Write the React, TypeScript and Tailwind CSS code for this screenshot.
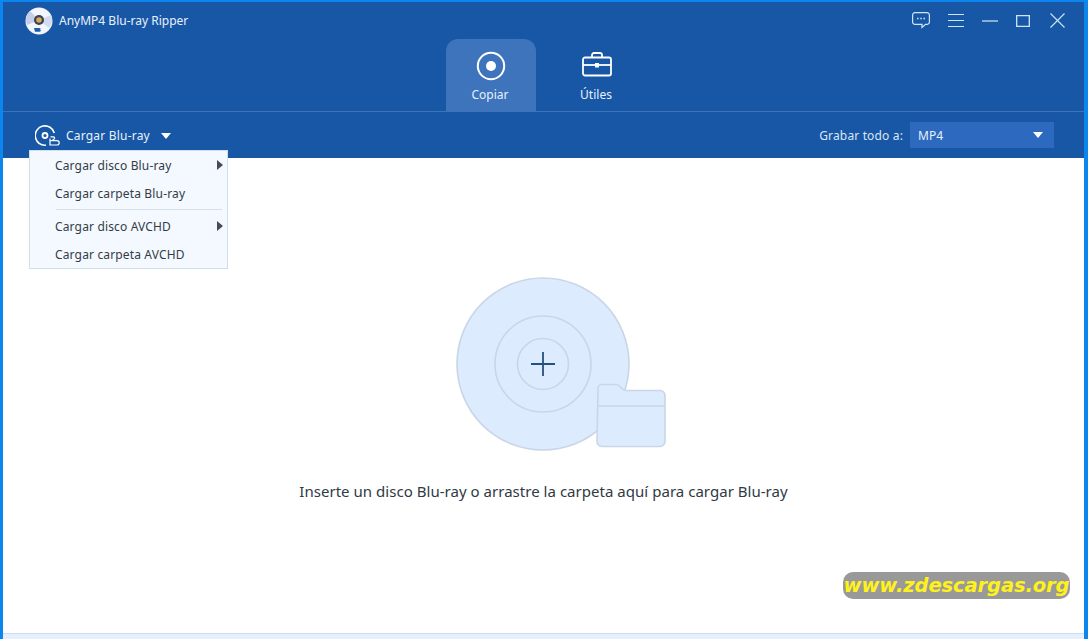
const font = "font-['Noto_Sans','DejaVu_Sans',sans-serif]"

function Caret({ className }: { className: string }) {
  return (
    <svg viewBox="0 0 12 7" className={className} fill="currentColor">
      <path d="M0 0h12L6 7z" />
    </svg>
  )
}

function DiscLogo() {
  return (
    <svg viewBox="0 0 28 28" className="h-7 w-7">
      <circle cx="14" cy="14" r="13.5" fill="#f2f5fb" />
      <path d="M14 13 L5 4 A13 13 0 0 0 2 18 Z" fill="#c5cdea" />
      <path d="M14 13 L24 21 A13 13 0 0 0 26 8 Z" fill="#d5dbef" />
      <circle cx="14" cy="13" r="5" fill="#39424f" />
      <circle cx="14" cy="13" r="2.8" fill="#d9a860" />
      <path d="M9 21h5c2 0 2 1.300 1 1.800 1.500.5 1 2-1 2h-4z" fill="#1d5bb0" />
    </svg>
  )
}

function MenuItem({ label, arrow }: { label: string; arrow?: boolean }) {
  return (
    <div className="flex h-[28px] items-center justify-between pl-[25px] pr-[4px] text-[12px] tracking-[0.15px] text-[#333c46]">
      <span className="pt-[2px]">{label}</span>
      {arrow && (
        <svg viewBox="0 0 6 10" className="h-[10px] w-[6px]" fill="#444c5a">
          <path d="M0 0l6 5-6 5z" />
        </svg>
      )}
    </div>
  )
}

export default function App() {
  return (
    <div className={`${font} relative flex h-[639px] w-[1088px] flex-col overflow-hidden border-t-[2px] border-r-[4px] border-l-[3px] border-[#0b86ee] bg-white`}>
      <header className="bg-[#1857a6] text-white">
        <div className="flex h-[37px] items-center justify-between pr-[19px] pl-[22px]">
          <div className="flex items-center gap-[6px]">
            <DiscLogo />
            <span className="text-[12px] text-[#e8f1fb]">AnyMP4 Blu-ray Ripper</span>
          </div>
          <div className="flex items-center gap-[18px] text-[#cfe6f8]">
            <svg viewBox="0 0 18 17" className="h-[17px] w-[18px]" fill="none" stroke="currentColor" strokeWidth="1.2">
              <path d="M3 .6h12a2.4 2.4 0 0 1 2.4 2.4v7a2.4 2.4 0 0 1-2.4 2.4h-1.5l-3.5 3v-3H3A2.4 2.4 0 0 1 .6 10V3A2.4 2.4 0 0 1 3 .6z" />
              <path d="M5 6.500h1.500M8.300 6.500h1.500M11.500 6.500H13" strokeWidth="1.6" />
            </svg>
            <svg viewBox="0 0 16 14" className="h-[14px] w-[16px]" stroke="currentColor" strokeWidth="1">
              <path d="M0 .5h16M0 6.500h16M0 12.500h16" />
            </svg>
            <svg viewBox="0 0 16 14" className="h-[14px] w-[16px]" stroke="currentColor" strokeWidth="1.2">
              <path d="M0 7h16" />
            </svg>
            <svg viewBox="0 0 14 12" className="h-[12px] w-[14px]" fill="none" stroke="currentColor" strokeWidth="1.3">
              <path d="M.7.7h12.600v10.600H.7z" />
            </svg>
            <svg viewBox="0 0 15 15" className="ml-[2px] h-[15px] w-[15px]" stroke="currentColor" strokeWidth="1.1">
              <path d="M.5.5l14 14M14.500.5l-14 14" />
            </svg>
          </div>
        </div>
        <div className="flex h-[73px] items-end justify-center border-b border-[#3d74b9]">
          <div className="flex h-[72px] w-[90px] flex-col items-center rounded-t-[12px] bg-[#3d74bb] pt-[12px]">
            <svg viewBox="0 0 30 30" className="h-[30px] w-[30px]">
              <circle cx="15" cy="15" r="13.2" fill="none" stroke="white" strokeWidth="2" />
              <circle cx="15" cy="15" r="5" fill="white" />
            </svg>
            <span className="mt-[5px] mr-[2px] text-[12px] text-[#e8f1fb]">Copiar</span>
          </div>
          <div className="ml-[15px] flex h-[72px] w-[90px] flex-col items-center pt-[13px]">
            <svg viewBox="0 0 30 26" className="ml-[2px] h-[26px] w-[30px]" fill="none" stroke="white" strokeWidth="1.8">
              <rect x="1" y="5.500" width="28" height="18" rx="2" />
              <path d="M1 13h28" />
              <path d="M10 5V3a2 2 0 0 1 2-2h6a2 2 0 0 1 2 2v2" />
              <rect x="13" y="11" width="4" height="4.500" fill="white" stroke="none" />
            </svg>
            <span className="mt-[8px] text-[12px] text-[#e8f1fb]">Útiles</span>
          </div>
        </div>
        <div className="flex h-[46px] items-center justify-between pt-px pr-[30px] pl-[32px]">
          <div className="flex items-center">
            <svg viewBox="0 0 26 22" className="h-[22px] w-[26px]" fill="none" stroke="white" strokeWidth="1.6">
              <path d="M19.300 8A9.700 9.700 0 1 0 11 20.200" />
              <circle cx="10" cy="10.500" r="2.500" strokeWidth="1.800" />
              <path d="M15 13.500v6.500h7a2.200 2.200 0 0 0 0-4.400h-7M17 15.600l2.500-2a1.300 1.300 0 0 0-1-1.800H15.500" strokeWidth="1.200" />
            </svg>
            <span className="ml-[5px] text-[12px] tracking-[0.2px] text-[#e8f1fb]">Cargar Blu-ray</span>
            <Caret className="ml-[11px] h-[6px] w-[10px] text-white" />
          </div>
          <div className="flex items-center">
            <span className="text-[12px] tracking-[0.15px] text-[#d8e6f5]">Grabar todo a:</span>
            <div className="mb-[2px] ml-[7px] flex h-[26px] w-[144px] items-center justify-between bg-[#2c69bf] pr-[11px] pl-[8px]">
              <span className="pt-[2px] text-[12px] text-[#e8f1fb]">MP4</span>
              <Caret className="h-[6px] w-[10px] text-white" />
            </div>
          </div>
        </div>
      </header>

      <main className="flex flex-1 flex-col items-center pt-[119px]">
        <svg viewBox="0 0 210 172" className="ml-[34px] h-[172px] w-[210px] overflow-visible">
          <circle cx="87" cy="87" r="86" fill="#dcebfd" stroke="#c9d6e6" strokeWidth="1.6" />
          <circle cx="87" cy="87" r="48" fill="#dcebfd" stroke="#c9d6e6" strokeWidth="1.6" />
          <circle cx="87" cy="87" r="25.500" fill="#dcebfd" stroke="#c9d6e6" strokeWidth="1.6" />
          <path d="M75 87h24M87 75v24" stroke="#24527e" strokeWidth="1.8" />
          <path d="M142 111.500a4 4 0 0 1 4-4h14a5 5 0 0 1 3.500 1.500l3 3a5 5 0 0 0 3.500 1.500h34a5 5 0 0 1 5 5v46a5 5 0 0 1-5 5h-58a5 5 0 0 1-5-5z" fill="#dcebfd" stroke="#c9d6e6" strokeWidth="1.6" />
          <path d="M142 129h67" stroke="#c9d6e6" strokeWidth="1.6" />
        </svg>
        <p className="mt-[31px] text-[15px] tracking-[0.03px] text-[#2f3a45]">
          Inserte un disco Blu-ray o arrastre la carpeta aquí para cargar Blu-ray
        </p>
      </main>

      <footer className="h-[6px] border-t border-[#c9dcf2] bg-[#e6f0fc]" />

      <div className="absolute top-[148px] left-[26px] w-[199px] border border-[#cfe0ea] bg-[#f3f9fe]">
        <MenuItem label="Cargar disco Blu-ray" arrow />
        <MenuItem label="Cargar carpeta Blu-ray" />
        <div className="mx-[26px] my-[2px] mr-[5px] border-t border-[#d4e0e6]" />
        <MenuItem label="Cargar disco AVCHD" arrow />
        <MenuItem label="Cargar carpeta AVCHD" />
      </div>

      <div className="absolute top-[570px] left-[840px] flex h-[27px] w-[227px] items-center justify-center rounded-[10px] bg-[#999999] font-['DejaVu_Sans',sans-serif] text-[19.5px] font-bold italic tracking-[-0.1px] text-[#fff21a]">
        www.zdescargas.org
      </div>
    </div>
  )
}
